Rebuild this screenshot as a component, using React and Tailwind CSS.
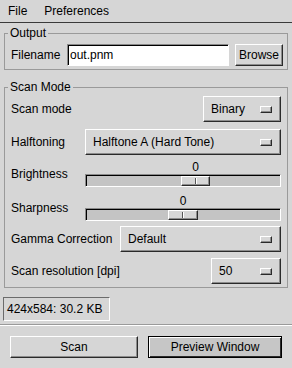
import React from "react";

const raised =
  "border border-t-white border-l-white border-b-[#2a2a2a] border-r-[#2a2a2a] shadow-[inset_-1px_-1px_0_#8c8c8c]";

function OptionMenu({ label, className = "" }) {
  return (
    <div className={`h-[26px] bg-[#d6d6d6] flex items-center pl-[7px] ${raised} ${className}`}>
      <span className="whitespace-nowrap">{label}</span>
      <div className={`ml-auto mr-[8px] w-[12px] h-[7px] ${raised}`} />
    </div>
  );
}

function Scale({ offset, width }) {
  return (
    <div className="flex-1 flex flex-col">
      <div className="h-[14px] flex">
        <div className="text-center leading-[14px]" style={{ marginLeft: offset + 1, width }}>
          0
        </div>
      </div>
      <div className="h-[13px] bg-[#c4c4c4] border border-t-[#8a8a8a] border-l-[#8a8a8a] border-b-white border-r-white shadow-[inset_1px_1px_0_#000] flex items-start">
        <div
          className={`mt-[1px] h-[10px] bg-[#d6d6d6] flex items-center justify-center ${raised}`}
          style={{ marginLeft: offset, width }}
        >
          <div className="w-[2px] h-[6px] border-l border-l-[#555] border-r border-r-white" />
        </div>
      </div>
    </div>
  );
}

export default function App() {
  return (
    <div className="w-[292px] h-[368px] bg-[#d6d6d6] text-black text-[12px] leading-[14px] font-['Liberation_Sans',Arial,sans-serif] flex flex-col overflow-hidden">
      {/* menu bar */}
      <div className="h-[23px] flex items-center border-b border-[#3a3a3a] pl-[8px]">
        <span>File</span>
        <span className="ml-[17px]">Preferences</span>
      </div>

      {/* output */}
      <fieldset className="mt-[3px] mx-[4px] border border-[#9a9a9a]">
        <legend className="ml-[3px] px-[2px]">Output</legend>
        <div className="pt-[4px] pb-[3px] pl-[6px] pr-[4px] flex items-center">
          <span className="w-[56px]">Filename</span>
          <div className="w-[162px] h-[22px] bg-white border border-t-[#888] border-l-[#888] border-b-white border-r-white shadow-[inset_1px_1px_0_#000] flex items-center pl-[2px]">
            out.pnm
          </div>
          <button className={`ml-[6px] w-[48px] h-[22px] bg-[#d6d6d6] ${raised}`}>Browse</button>
        </div>
      </fieldset>

      {/* scan mode */}
      <fieldset className="mt-[10px] mx-[4px] border border-[#9a9a9a]">
        <legend className="ml-[3px] px-[2px]">Scan Mode</legend>
        <div className="pl-[6px] pr-[6px] pb-[3px] flex flex-col">
          <div className="mt-[2px] h-[26px] flex items-center">
            <span>Scan mode</span>
            <OptionMenu label="Binary" className="ml-auto w-[78px]" />
          </div>
          <div className="mt-[7px] h-[26px] flex items-center">
            <span className="w-[74px] shrink-0">Halftoning</span>
            <OptionMenu label="Halftone A (Hard Tone)" className="flex-1" />
          </div>
          <div className="mt-[5px] h-[27px] flex items-center">
            <span className="w-[74px] shrink-0">Brightness</span>
            <Scale offset={95} width={29} />
          </div>
          <div className="mt-[7px] h-[27px] flex items-center">
            <span className="w-[74px] shrink-0">Sharpness</span>
            <Scale offset={82} width={30} />
          </div>
          <div className="mt-[5px] h-[26px] flex items-center">
            <span className="w-[109px] shrink-0">Gamma Correction</span>
            <OptionMenu label="Default" className="flex-1" />
          </div>
          <div className="mt-[6px] h-[26px] flex items-center">
            <span>Scan resolution [dpi]</span>
            <OptionMenu label="50" className="ml-auto w-[70px]" />
          </div>
        </div>
      </fieldset>

      {/* status */}
      <div className="mt-[9px] ml-[3px] w-[107px] h-[24px] border border-t-[#6b6b6b] border-l-[#6b6b6b] border-b-white border-r-white flex items-center pl-[3px] whitespace-nowrap">
        424x584: 30.2 KB
      </div>

      <div className="mt-[3px] border-t border-t-[#9a9a9a] border-b border-b-white" />

      {/* buttons */}
      <div className="mt-[10px] flex items-start">
        <button className={`ml-[10px] w-[128px] h-[22px] bg-[#d6d6d6] ${raised}`}>Scan</button>
        <button className="ml-[10px] w-[134px] h-[22px] bg-[#c6c6c6] border border-black shadow-[inset_1px_1px_0_white,inset_-1px_-1px_0_#2a2a2a]">
          Preview Window
        </button>
      </div>
    </div>
  );
}
